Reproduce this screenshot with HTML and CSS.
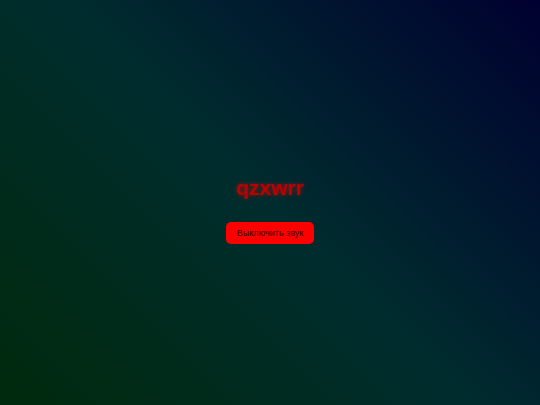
FILE: index.html
```html
<!DOCTYPE html>
<html lang="ru">
<head>
<meta charset="utf-8">
<title>qzxwrr</title>
<link rel="stylesheet" href="styles.css">
</head>
<body>
<main class="stage">
  <h1 class="title">qzxwrr</h1>
  <button class="mute-btn" type="button">Выключить звук</button>
</main>
</body>
</html>
```
FILE: styles.css
```css
html, body {
  margin: 0;
  padding: 0;
  height: 100%;
}
body {
  font-family: "Liberation Sans", Arial, sans-serif;
  background: linear-gradient(45deg, #002a0c 0%, #002c2e 50%, #000030 100%);
  overflow: hidden;
}
.stage {
  height: 100%;
  box-sizing: border-box;
  padding-top: 15px;
  display: flex;
  flex-direction: column;
  align-items: center;
  justify-content: center;
  gap: 22px;
}
.title {
  margin: 0;
  font-size: 21px;
  font-weight: bold;
  line-height: 24px;
  color: #bb0000;
  text-shadow: 0 0 4px rgba(255, 0, 0, 0.6);
  filter: blur(0.5px);
}
.mute-btn {
  font-family: "Liberation Sans", Arial, sans-serif;
  font-size: 9px;
  color: #3a0000;
  background: #ff0000;
  border: none;
  border-radius: 5px;
  width: 88px;
  height: 22px;
  padding: 0;
  cursor: pointer;
}
```
